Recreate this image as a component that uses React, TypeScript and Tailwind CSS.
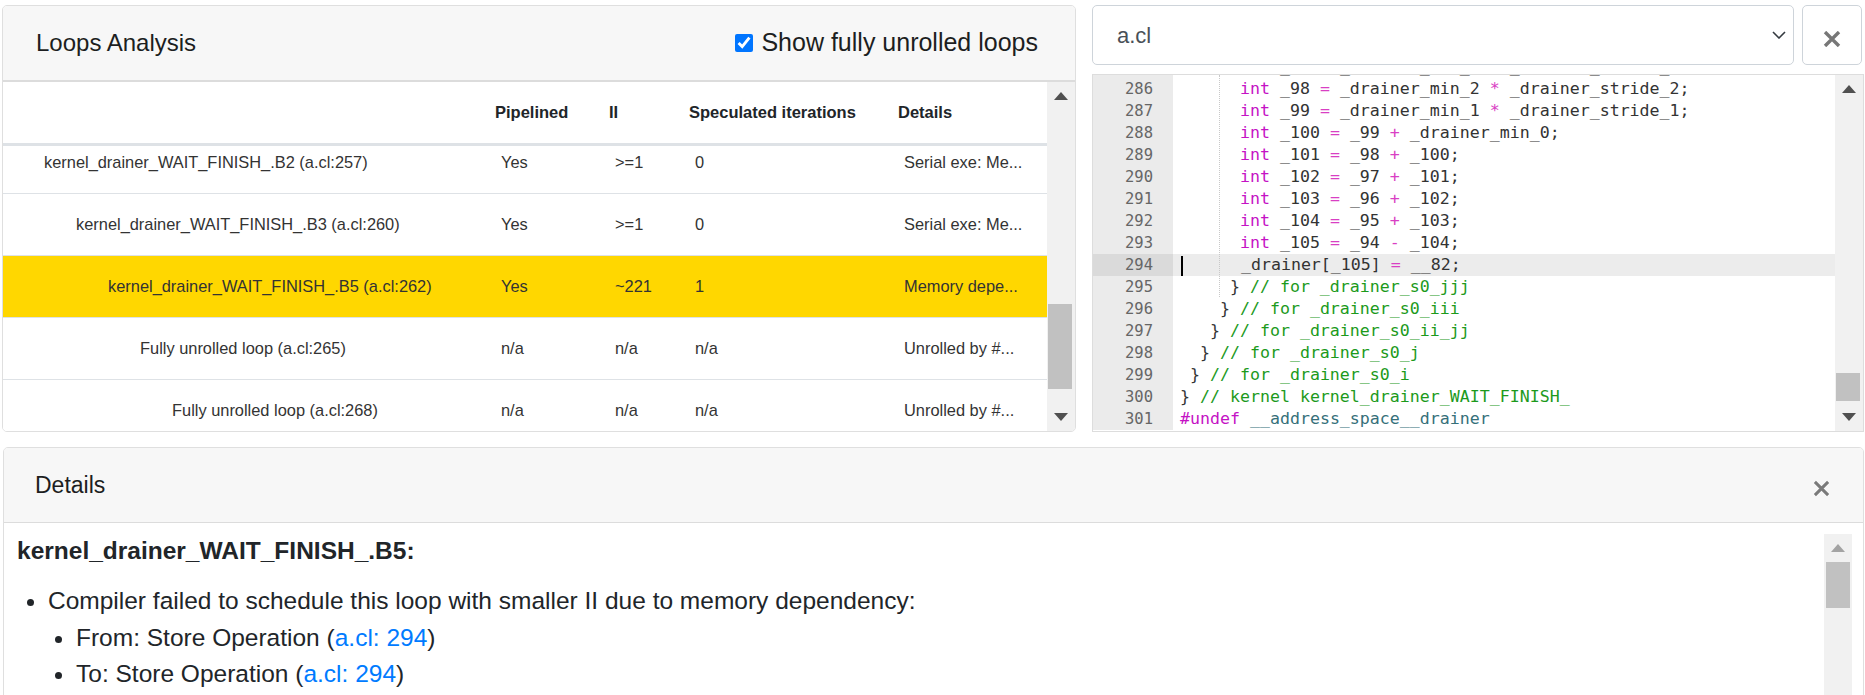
import React from "react";

type Row = {
  name: string;
  level: number;
  pipelined: string;
  ii: string;
  spec: string;
  details: string;
  active?: boolean;
};

const rows: Row[] = [
  { name: "kernel_drainer_WAIT_FINISH_.B2 (a.cl:257)", level: 0, pipelined: "Yes", ii: ">=1", spec: "0", details: "Serial exe: Me..." },
  { name: "kernel_drainer_WAIT_FINISH_.B3 (a.cl:260)", level: 1, pipelined: "Yes", ii: ">=1", spec: "0", details: "Serial exe: Me..." },
  { name: "kernel_drainer_WAIT_FINISH_.B5 (a.cl:262)", level: 2, pipelined: "Yes", ii: "~221", spec: "1", details: "Memory depe...", active: true },
  { name: "Fully unrolled loop (a.cl:265)", level: 3, pipelined: "n/a", ii: "n/a", spec: "n/a", details: "Unrolled by #..." },
  { name: "Fully unrolled loop (a.cl:268)", level: 4, pipelined: "n/a", ii: "n/a", spec: "n/a", details: "Unrolled by #..." },
];

const indents = ["pl-[41px]", "pl-[73px]", "pl-[105px]", "pl-[137px]", "pl-[169px]"];

const codeLines: [number, string][] = [
  [285, "      int _97 = _drainer_min_3 * _drainer_stride_3;"],
  [286, "      int _98 = _drainer_min_2 * _drainer_stride_2;"],
  [287, "      int _99 = _drainer_min_1 * _drainer_stride_1;"],
  [288, "      int _100 = _99 + _drainer_min_0;"],
  [289, "      int _101 = _98 + _100;"],
  [290, "      int _102 = _97 + _101;"],
  [291, "      int _103 = _96 + _102;"],
  [292, "      int _104 = _95 + _103;"],
  [293, "      int _105 = _94 - _104;"],
  [294, "      _drainer[_105] = __82;"],
  [295, "     } // for _drainer_s0_jjj"],
  [296, "    } // for _drainer_s0_iii"],
  [297, "   } // for _drainer_s0_ii_jj"],
  [298, "  } // for _drainer_s0_j"],
  [299, " } // for _drainer_s0_i"],
  [300, "} // kernel kernel_drainer_WAIT_FINISH_"],
  [301, "#undef __address_space__drainer"],
];

function Code({ line }: { line: string }) {
  const ci = line.indexOf("//");
  const code = ci >= 0 ? line.slice(0, ci) : line;
  const comment = ci >= 0 ? line.slice(ci) : "";
  const parts = code.split(/(\bint\b|#undef|[=*+\-]|__address_space__drainer)/);
  return (
    <>
      {parts.map((p, i) => {
        if (p === "int" || p === "#undef")
          return (
            <span key={i} className="text-[#c512c5]">
              {p}
            </span>
          );
        if (/^[=*+\-]$/.test(p))
          return (
            <span key={i} className="text-[#d93fc4]">
              {p}
            </span>
          );
        if (p === "__address_space__drainer")
          return (
            <span key={i} className="text-[#36707a]">
              {p}
            </span>
          );
        return <span key={i}>{p}</span>;
      })}
      {comment && <span className="text-[#1c9a1c]">{comment}</span>}
    </>
  );
}

const UpArrow = () => (
  <svg width="14" height="8" viewBox="0 0 14 8">
    <polygon points="7,0 14,8 0,8" fill="#505050" />
  </svg>
);

const DownArrow = () => (
  <svg width="14" height="8" viewBox="0 0 14 8">
    <polygon points="0,0 14,0 7,8" fill="#505050" />
  </svg>
);

const CloseX = ({ size = 18 }: { size?: number }) => (
  <svg width={size} height={size} viewBox="0 0 18 18">
    <path d="M2 2 L16 16 M16 2 L2 16" stroke="#7a7a7a" strokeWidth="3.2" strokeLinecap="butt" />
  </svg>
);

function LoopsCard() {
  return (
    <div className="w-[1074px] h-[427px] border border-[#dfdfdf] rounded-[5px] overflow-hidden flex flex-col">
      <div className="h-[76px] shrink-0 bg-[#f7f7f7] border-b-2 border-[#dcdcdc] flex items-center justify-between pl-[33px] pr-[37px]">
        <span className="text-[24px] text-[#1c1e21]">Loops Analysis</span>
        <label className="flex items-center gap-[8px] text-[25px] text-[#1c1e21]">
          <input type="checkbox" defaultChecked className="w-[18px] h-[18px] accent-[#0075ff]" />
          <span>Show fully unrolled loops</span>
        </label>
      </div>
      <div className="flex flex-1 min-h-0">
        <div className="w-[1044px] flex flex-col">
          <div className="h-[64px] shrink-0 border-b-[3px] border-[#dee2e6] flex items-center text-[16.5px] font-bold text-[#212529]">
            <div className="w-[487px]" />
            <div className="w-[114px] pl-[5px]">Pipelined</div>
            <div className="w-[80px] pl-[5px]">II</div>
            <div className="w-[209px] pl-[5px]">Speculated iterations</div>
            <div className="w-[154px] pl-[5px]">Details</div>
          </div>
          <div className="flex-1 overflow-hidden">
            <div className="mt-[-14px]">
              {rows.map((r) => (
                <div
                  key={r.name}
                  className={
                    "h-[62px] flex items-center border-b border-[#dee2e6] text-[16.4px] text-[#333] " +
                    (r.active ? "bg-[#ffd700]" : "bg-white")
                  }
                >
                  <div className={"w-[487px] whitespace-nowrap " + indents[r.level]}>{r.name}</div>
                  <div className="w-[114px] pl-[11px]">{r.pipelined}</div>
                  <div className="w-[80px] pl-[11px]">{r.ii}</div>
                  <div className="w-[209px] pl-[11px]">{r.spec}</div>
                  <div className="w-[154px] pl-[11px] whitespace-nowrap">{r.details}</div>
                </div>
              ))}
            </div>
          </div>
        </div>
        <div className="w-[28px] bg-[#f1f1f1] flex flex-col">
          <div className="h-[28px] flex items-center justify-center">
            <UpArrow />
          </div>
          <div className="flex-1">
            <div className="mt-[194px] ml-[1px] w-[24px] h-[85px] bg-[#c1c1c1]" />
          </div>
          <div className="h-[28px] flex items-center justify-center">
            <DownArrow />
          </div>
        </div>
      </div>
    </div>
  );
}

function SourcePanel() {
  return (
    <div className="ml-[16px] w-[773px]">
      <div className="flex gap-[8px] h-[60px]">
        <div className="w-[702px] border border-[#ced4da] rounded-[5px] flex items-center justify-between pl-[24px] pr-[7px]">
          <span className="text-[22px] text-[#495057]">a.cl</span>
          <svg width="14" height="8" viewBox="0 0 14 8">
            <path d="M1 1 L7 7 L13 1" stroke="#343a40" strokeWidth="1.6" fill="none" />
          </svg>
        </div>
        <div className="w-[60px] border border-[#ced4da] rounded-[5px] flex items-center justify-center pt-[8px]">
          <svg width="18" height="16" viewBox="0 0 18 16">
            <path d="M2 1 L16 15 M16 1 L2 15" stroke="#777" strokeWidth="3.4" />
          </svg>
        </div>
      </div>
      <div className="mt-[9px] h-[358px] w-[772px] border border-[#dddddd] flex overflow-hidden font-['DejaVu_Sans_Mono',monospace]">
        <div className="flex-1 overflow-hidden relative">
          <div className="mt-[-19px]">
            {codeLines.map(([n, text]) => (
              <div key={n} className={"flex h-[22px] leading-[22px] " + (n === 294 ? "bg-[#ececec]" : "")}>
                <div
                  className={
                    "w-[80px] shrink-0 text-right pr-[20px] text-[15.5px] text-[#666] " +
                    (n === 294 ? "bg-[#dadada]" : "bg-[#ebebeb]")
                  }
                >
                  {n}
                </div>
                <div className="pl-[7px] whitespace-pre text-[16.6px] text-[#333]">
                  {n === 294 && <span className="inline-block align-middle w-[2px] h-[20px] bg-black mr-[-2px] ml-[1px]" />}
                  <Code line={text} />
                </div>
              </div>
            ))}
          </div>
          <div className="absolute left-[126px] top-0 h-[222px] border-l border-dotted border-[#c8c8c8]" />
        </div>
        <div className="w-[28px] shrink-0 bg-[#f1f1f1] flex flex-col">
          <div className="h-[28px] flex items-center justify-center">
            <UpArrow />
          </div>
          <div className="flex-1">
            <div className="mt-[270px] ml-[1px] w-[24px] h-[28px] bg-[#c1c1c1]" />
          </div>
          <div className="h-[28px] flex items-center justify-center">
            <DownArrow />
          </div>
        </div>
      </div>
    </div>
  );
}

function DetailsCard() {
  return (
    <div className="mt-[15px] ml-[3px] w-[1861px] h-[260px] border border-[#dfdfdf] rounded-t-[5px] overflow-hidden">
      <div className="h-[75px] bg-[#f7f7f7] border-b border-[#dcdcdc] flex items-center justify-between pl-[31px] pr-[33px]">
        <span className="text-[23px] text-[#1c1e21]">Details</span>
        <div className="mt-[6px]">
          <CloseX size={17} />
        </div>
      </div>
      <div className="flex">
        <div className="flex-1 pl-[13px] pt-[10px] text-[24.5px] leading-[1.5] text-[#212529]">
          <div className="font-bold mb-[13px]">kernel_drainer_WAIT_FINISH_.B5:</div>
          <ul className="list-disc pl-[31px]">
            <li>
              Compiler failed to schedule this loop with smaller II due to memory dependency:
              <ul className="list-disc pl-[28px]">
                <li>
                  From: Store Operation (<span className="text-[#007bff]">a.cl: 294</span>)
                </li>
                <li>
                  To: Store Operation (<span className="text-[#007bff]">a.cl: 294</span>)
                </li>
              </ul>
            </li>
          </ul>
        </div>
        <div className="w-[28px] mt-[11px] mr-[11px] h-[200px] bg-[#f1f1f1] flex flex-col">
          <div className="h-[28px] flex items-center justify-center">
            <svg width="14" height="8" viewBox="0 0 14 8">
              <polygon points="7,0 14,8 0,8" fill="#a3a3a3" />
            </svg>
          </div>
          <div className="ml-[2px] w-[24px] h-[46px] bg-[#c1c1c1]" />
        </div>
      </div>
    </div>
  );
}

export default function App() {
  return (
    <div className="w-[1865px] h-[695px] overflow-hidden bg-white font-['Liberation_Sans',Arial,sans-serif]">
      <div className="flex pt-[5px] pl-[2px]">
        <LoopsCard />
        <SourcePanel />
      </div>
      <DetailsCard />
    </div>
  );
}
